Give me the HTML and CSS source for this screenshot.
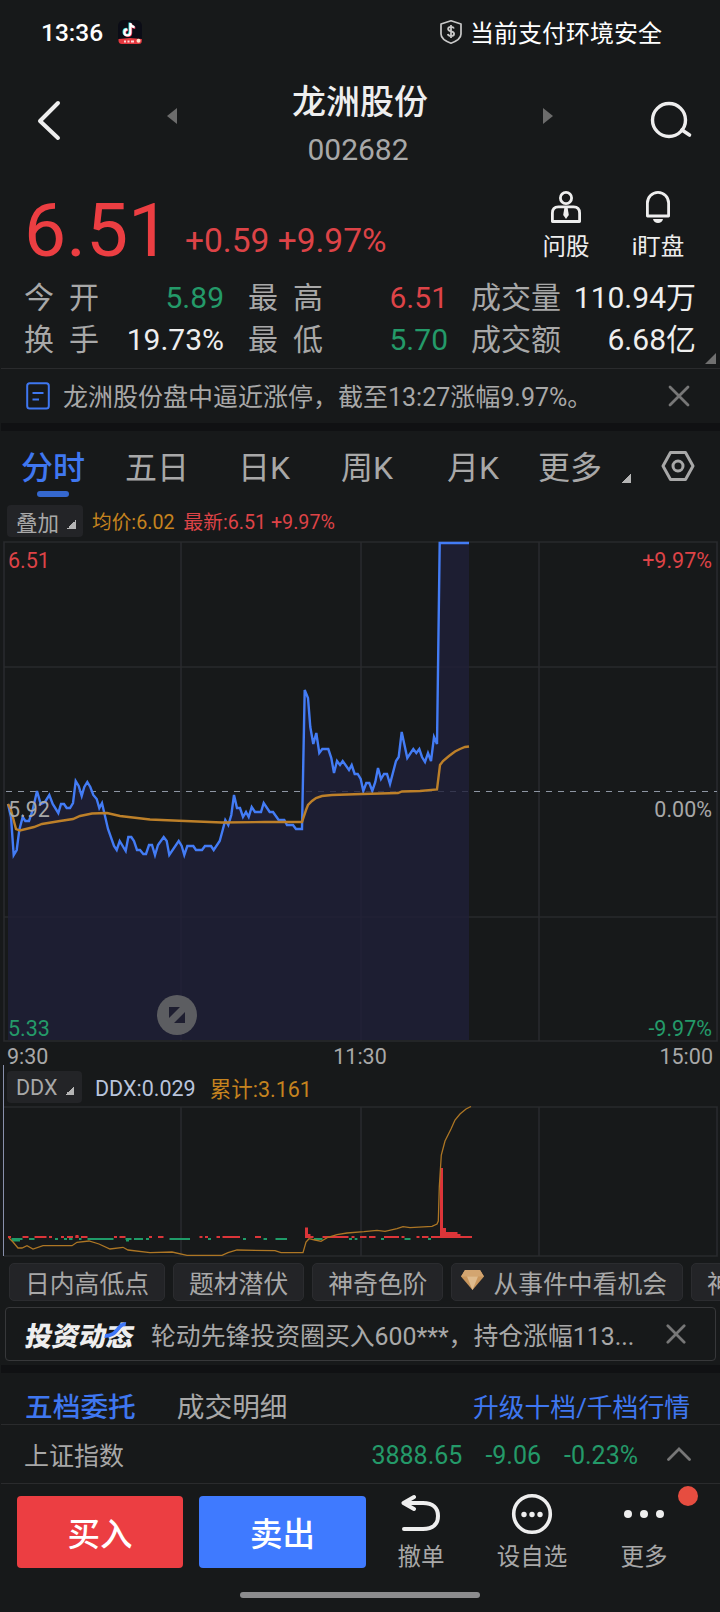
FILE: index.html
```html
<!DOCTYPE html>
<html lang="zh-CN">
<head>
    <meta charset="UTF-8">
    <meta name="viewport" content="width=device-width, initial-scale=1.0">
    <title>龙洲股份 002682</title>
    <link rel="stylesheet" href="styles.css">
</head>
<body>
    <div class="statusbar">
        <span class="clock">13:36</span>
        <svg class="app-icon" width="24" height="24" viewBox="0 0 24 24">
            <rect width="24" height="24" rx="6" fill="#0b0c16"/>
            <path d="M12.2 3v9.4a3 3 0 1 1-3-3M12.2 3.4c.4 2.3 2 3.6 4.2 3.8" transform="translate(-.6 -.5)" fill="none" stroke="#35dfe4" stroke-width="2.2"/>
            <path d="M12.2 3v9.4a3 3 0 1 1-3-3M12.2 3.4c.4 2.3 2 3.6 4.2 3.8" transform="translate(.9 .6)" fill="none" stroke="#ee3455" stroke-width="2.2"/>
            <path d="M12.2 3v9.4a3 3 0 1 1-3-3M12.2 3.4c.4 2.3 2 3.6 4.2 3.8" transform="translate(.2 0)" fill="none" stroke="#fff" stroke-width="2.2"/>
            <path d="M0.5 19 12 18l11.800 1v2a3 3 0 0 1-3 3H4a3.500 3.500 0 0 1-3.500-3z" fill="#e5383f"/>
            <path d="M6 21.500h2M9.500 21.500h2M13 21.500h3" stroke="#ffd6d6" stroke-width="2"/>
            <circle cx="20.500" cy="20.800" r="2" fill="#fbe3cc"/>
        </svg>
        <svg class="shield" width="24" height="26" viewBox="0 0 24 26">
            <path d="M12 1.800 22 5v10c0 4-4 7-10 9.200C6 22 2 19 2 15V5z" fill="none" stroke="#c8c8c8" stroke-width="1.700" stroke-linejoin="round"/>
            <path d="M15 9.500c-.5-1.300-1.600-1.700-3-1.700-1.700 0-2.900.8-2.900 2.200 0 3.200 6 1.700 6 4.800 0 1.500-1.300 2.300-3.100 2.300-1.600 0-2.800-.6-3.200-2M12 6v13" fill="none" stroke="#c8c8c8" stroke-width="1.800"/>
        </svg>
        <span class="pay-safe">当前支付环境安全</span>
    </div>

    <div class="header">
        <svg class="back" width="26" height="42" viewBox="0 0 26 42"><path d="M21 3 3 21l18 17" fill="none" stroke="#eee" stroke-width="4" stroke-linecap="round" stroke-linejoin="round"/></svg>
        <svg class="arrow" width="10" height="16" viewBox="0 0 10 16"><path d="M10 0v16L0 8z" fill="#6c6c6c"/></svg>
        <div class="title">
            <h1>龙洲股份</h1>
            <div class="code">002682</div>
        </div>
        <svg class="arrow" width="10" height="16" viewBox="0 0 10 16"><path d="M0 0v16l10-8z" fill="#6c6c6c"/></svg>
        <svg class="search" width="44" height="40" viewBox="0 0 44 40"><circle cx="20" cy="20" r="16.500" fill="none" stroke="#eee" stroke-width="3.400"/><path d="m33 30 7.500 5" stroke="#eee" stroke-width="3.600" stroke-linecap="round"/></svg>
    </div>

    <div class="quote">
        <div class="price">6.51</div>
        <div class="change">+0.59 +9.97%</div>
        <div class="quick">
            <svg width="34" height="36" viewBox="0 0 34 36"><g fill="none" stroke="#eee" stroke-width="2.800"><circle cx="17" cy="9" r="5.600"/><path d="M3.400 32.500V24c0-4 2-6.200 6-6.200h15.200c4 0 6 2.200 6 6.200v8.500z" stroke-linejoin="round"/></g><path d="M15.500 18h3l1.300 8-2.800 4-2.800-4z" fill="#eee"/></svg>
            <span>问股</span>
        </div>
        <div class="quick">
            <svg width="34" height="36" viewBox="0 0 34 36"><path d="M6.400 27V14a10.600 10.600 0 0 1 21.200 0v13z" fill="none" stroke="#eee" stroke-width="2.800" stroke-linejoin="round"/><path d="M12 30h10c-.5 2.500-2.500 4-5 4s-4.500-1.500-5-4z" fill="#eee"/></svg>
            <span>i盯盘</span>
        </div>
    </div>

    <div class="stats">
        <span class="label wide">今开</span><span class="value green">5.89</span>
        <span class="label wide">最高</span><span class="value red">6.51</span>
        <span class="label">成交量</span><span class="value">110.94万</span>
        <span class="label wide">换手</span><span class="value">19.73%</span>
        <span class="label wide">最低</span><span class="value green">5.70</span>
        <span class="label">成交额</span><span class="value">6.68亿</span>
        <i class="corner"></i>
    </div>

    <div class="notice">
        <svg width="24" height="28" viewBox="0 0 24 28"><g fill="none" stroke="#3f77f0" stroke-width="2"><rect x="1.200" y="1.200" width="21.600" height="25.200" rx="2.500"/><path d="M6.500 11h11M6.500 17.500h6.500"/></g></svg>
        <span class="notice-text">龙洲股份盘中逼近涨停，截至13:27涨幅9.97%。</span>
        <svg width="22" height="22" viewBox="0 0 22 22"><path d="m2 2 18 18M20 2 2 20" stroke="#777" stroke-width="2.800" stroke-linecap="round"/></svg>
    </div>

    <div class="band"></div>

    <div class="tabs">
        <span class="tab active">分时</span>
        <span class="tab">五日</span>
        <span class="tab">日K</span>
        <span class="tab">周K</span>
        <span class="tab">月K</span>
        <span class="tab">更多</span>
        <i class="tri"></i>
        <svg width="34" height="32" viewBox="0 0 34 32"><g fill="none" stroke="#a8a8a8" stroke-width="3"><path d="M9.500 2.500h15L32 16l-7.500 13.500h-15L2 16z" stroke-linejoin="round"/><circle cx="17" cy="16" r="5"/></g></svg>
    </div>

    <div class="legend">
        <span class="pick">叠加<i class="tri"></i></span>
        <span class="orange">均价:6.02</span>
        <span class="red">最新:6.51 +9.97%</span>
    </div>

    <div class="chart">
        <svg width="720" height="504" viewBox="0 540 720 504">
            <g class="grid">
                <path d="M4 542H717V1041H4zM181 542V1041M361 542V1041M539 542V1041M4 667H717M4 917H717"/>
            </g>
            <path d="M6 791.500H717" stroke="#8e96a3" stroke-width="1" stroke-dasharray="6 6"/>
            <path id="area" class="area"/>
            <polyline id="price" class="price-line" points="8,804 11,817 13.700,855 16.700,850 19.300,830 22.700,817 25.300,821 29,821 32.700,810 37,791 40.700,804 45,802 49.300,795 52.700,804 58.300,813 61,804 64,804 66.700,808 70,808 73,803 75.700,781 78.700,786 81.700,796 84.300,787 87.300,782 90.300,787 93.300,795 96.700,799 99.300,808 102,803 108,829 114,846 116.700,850 119.700,841 125.700,851 128.300,837 131.300,837 134,841 137,850 140,850 143.300,854 146,854 149,845 152,845 155,855 158,845 163.700,837 166.700,841 169.300,855 178.700,841 181.700,846 184.300,855 187.300,846 193.300,846 196,850 202,850 205,846 211,846 213.700,850 219.700,841 222.700,830 225.300,820 228.300,825 231.300,815 234,795 237,808 240,808 243,817 246,812 248.700,817 251.700,807 255,812 261,812 263.700,803 269.700,812 273,812 278.700,820 284.300,820 287,825 293,825 296,829 302,829 304.700,690 308,698 310.300,727 313.300,744 316.300,733 319.300,753 322.300,749 328.300,749 331.300,758 334,773 337,761 340,765 342.700,761 349,770 351.700,765 354.700,774 357.700,774 360.700,779 363.300,791 366.300,783 369.300,783 372.300,791 375.300,782 378,768 381,779 384,774 387,774 390,784 396,761 398.700,757 401.700,732 407.300,758 413.300,749 416.300,753 419.300,749 422,757 425,762 428,753 431,761 434,737 437,744 439.700,543 469,543"/>
            <polyline class="avg-line" points="8,804 11,810 16,829 20,830.500 34,827 42,824 60,821 73,819 80,816 92,813.500 107,813 120,816 150,819.500 185,821 222,822.500 265,822 302,822 306,810 308,805 312,801 316,798 322,796 332,795 362,794 398,793 402,791.500 420,791 437,789.500 440,765 443,761 449,756 455,751.500 460,749 465,747 469,746.500"/>
        </svg>
        <span class="axis top left red">6.51</span>
        <span class="axis top right red">+9.97%</span>
        <span class="axis mid left">5.92</span>
        <span class="axis mid right">0.00%</span>
        <span class="axis low left green">5.33</span>
        <span class="axis low right green">-9.97%</span>
        <svg class="expand" width="40" height="40" viewBox="0 0 40 40"><circle cx="20" cy="20" r="20" fill="#5c5d61"/><path d="M12 12h11L12 23zM28 17v11H17z" fill="#1e1e30"/></svg>
    </div>
    <div class="times"><span>9:30</span><span>11:30</span><span>15:00</span></div>

    <div class="ddx">
        <div class="legend">
            <span class="pick">DDX<i class="tri"></i></span>
            <span class="pale">DDX:0.029</span>
            <span class="orange">累计:3.161</span>
        </div>
        <svg width="720" height="152" viewBox="0 1106 720 152">
            <path class="grid" d="M4 1107H717V1256H4M181 1107V1256M361 1107V1256M539 1107V1256"/>
            <path d="M11.500 20h11M29 20h5.500M55 20h3M64 20h3M69 20h3.500M79 20h2.500M87.500 20h26M125.500 20h6M134 20h9M146 20h3M169.500 20h20.500M208 20h3M243 20h3M263.500 20h3.500M275.500 20h11.500M314 20h8.500M349 20h3M354.700 20h2.700M381 20h3M404.500 20h6M428 20h3" transform="translate(0 1219)" stroke="#1f9c69" stroke-width="2"/>
            <path d="M12 1240.500h8M126 1240.500h3" stroke="#1f9c69" stroke-width="2"/>
            <path d="M8 1237h3M22.500 1237h6M34.500 1237h12M49 1237h3M61 1237h3M67 1237h6M75.500 1237h3M81 1237h6.500M114 1237h3M119.500 1237h6M149 1237h3M158 1237h5.500M199.500 1237h3M205 1237h3M216.500 1237h3.500M222.500 1237h17.500M255 1237h6M322.500 1237h26M351.500 1237h3M360 1237h6.500M369 1237h6.500M384 1237h15M401.500 1237h3M416.500 1237h3M422 1237h6.500M431 1237h9" stroke="#dc3539" stroke-width="2"/>
            <path d="M75.500 1235h3v3h-3zM305 1227.500h3v10.500h-3zM308 1234h2.500v4H308zM310.500 1236h3v2h-3zM440 1168h3v70h-3zM443 1228h3v10h-3zM446 1232h11.500v6H446zM457.500 1234h3v4h-3zM460.500 1236H472v2h-11.500z" fill="#dc3539"/>
            <polyline class="sum-line" points="9,1238 13,1242 18,1248 22,1248 27,1245.700 33,1249 43,1245.700 72,1245.700 77,1242.300 89,1241 99,1244 110,1249 123,1247.300 128,1250 150,1252.700 172,1252 187,1255.300 222,1255.300 228,1252.700 237,1250 275,1250.700 281,1252.700 303,1252.700 306,1242 309,1238.700 315,1240 321,1241.300 328,1237.300 337,1234.700 347,1233 364,1231.700 377,1230.300 385,1231.300 397,1228.700 403,1226.700 410,1227.700 432,1226.300 437,1224 438.300,1221 439.300,1187 441.300,1155 445,1141 451,1129 455,1120 460,1114 466,1109 471,1106.500"/>
        </svg>
    </div>

    <div class="chips">
        <span class="chip">日内高低点</span>
        <span class="chip">题材潜伏</span>
        <span class="chip">神奇色阶</span>
        <span class="chip gem"><svg width="23" height="20" viewBox="0 0 23 20"><path d="M4 0h15l4 6.500L11.500 20 0 6.500z" fill="#c9965c"/><path d="M4 0h15l4 6.500H0z" fill="#d3a570"/><path d="M6 6.500h11L11.500 20z" fill="#dfbb8d"/></svg>从事件中看机会</span>
        <span class="chip">神</span>
    </div>

    <div class="feed">
        <span class="feed-logo">投资动态<svg width="22" height="17" viewBox="0 0 22 17"><path d="M1 14c8 0 10-4 12-7 1.500-3 3-5 7-5" fill="none" stroke="#3f77f8" stroke-width="4"/></svg></span>
        <span class="feed-text">轮动先锋投资圈买入600***，持仓涨幅113...</span>
        <svg width="20" height="20" viewBox="0 0 22 22"><path d="m2 2 18 18M20 2 2 20" stroke="#777" stroke-width="3" stroke-linecap="round"/></svg>
    </div>

    <div class="band"></div>

    <div class="orders">
        <span class="blue">五档委托</span>
        <span>成交明细</span>
        <span class="upgrade">升级十档/千档行情</span>
    </div>

    <div class="index">
        <span class="index-name">上证指数</span>
        <span>3888.65</span>
        <span>-9.06</span>
        <span>-0.23%</span>
        <svg width="24" height="14" viewBox="0 0 24 14"><path d="M1.500 12.500 12 2l10.500 10.500" fill="none" stroke="#777" stroke-width="2.800" stroke-linecap="round"/></svg>
    </div>

    <div class="actions">
        <button class="btn buy">买入</button>
        <button class="btn sell">卖出</button>
        <div class="action cancel">
            <svg width="42" height="42" viewBox="0 0 42 42"><path d="M14 4 3.500 10 14 16M4 10h19c10 0 15 5 15 13s-5 13-15 13H4" fill="none" stroke="#eee" stroke-width="4" stroke-linecap="round" stroke-linejoin="round"/></svg>
            <span>撤单</span>
        </div>
        <div class="action pick-stock">
            <svg width="42" height="42" viewBox="0 0 42 42"><circle cx="21" cy="21" r="18.300" fill="none" stroke="#eee" stroke-width="3.600"/><g fill="#eee"><circle cx="13" cy="21.500" r="2.700"/><circle cx="21" cy="21.500" r="2.700"/><circle cx="29" cy="21.500" r="2.700"/></g></svg>
            <span>设自选</span>
        </div>
        <div class="action more">
            <svg width="42" height="42" viewBox="0 0 42 42"><g fill="#eee"><circle cx="5" cy="21" r="4"/><circle cx="21" cy="21" r="4"/><circle cx="37" cy="21" r="4"/></g></svg>
            <span>更多</span>
            <i class="badge"></i>
        </div>
    </div>
    <div class="home-bar"></div>

    <script>
        // close the price line down to the bottom of the chart for the fill
        const points = document.getElementById('price').getAttribute('points');
        document.getElementById('area').setAttribute('d', 'M8,1040 L' + points + ' L469,1040 Z');
    </script>
</body>
</html>
```
FILE: styles.css
```css
* {
    box-sizing: border-box;
}
body {
    margin: 0;
    width: 720px;
    height: 1612px;
    overflow: hidden;
    background-color: #17191a;
    color: #a8a8a8;
    font-family: Roboto, "Noto Sans CJK SC", sans-serif;
    white-space: nowrap;
}
svg {
    display: block;
    flex: none;
}
.red { color: #dd4347; }
.green { color: #249a69; }
.orange { color: #c5831f; }
.blue { color: #3f77f0; }
.pale { color: #b9c4dc; }

.statusbar {
    display: flex;
    align-items: center;
    height: 64px;
    padding: 0 58px 0 41px;
    color: #fff;
    font-size: 24px;
}
.clock {
    width: 77px;
    font-size: 24.5px;
    font-weight: 500;
    line-height: 30px;
    padding-top: 1px;
}
.shield {
    margin: 0 7px 0 auto;
}
.pay-safe {
    padding-bottom: 2px;
}

.header {
    display: flex;
    align-items: flex-start;
    height: 116px;
    padding: 16px 27px 0 37px;
}
.back {
    margin-top: 20px;
}
.arrow {
    margin: 28px 0 0 104px;
}
.title {
    width: 366px;
    text-align: center;
}
.title + .arrow {
    margin-left: 0;
}
.search {
    margin: 20px 0 0 auto;
}
h1 {
    margin: 0;
    color: #eee;
    font-size: 34px;
    font-weight: 500;
    line-height: 45px;
}
.code {
    margin: 7px 4px 0 0;
    font-size: 30px;
    line-height: 36px;
}

.quote {
    display: flex;
    height: 97px;
    padding-left: 24px;
}
.price {
    width: 161px;
    color: #ec3e42;
    font-size: 75px;
    line-height: 100px;
}
.change {
    width: 347px;
    color: #dd4347;
    font-size: 33.5px;
    line-height: 122px;
}
.quick {
    display: flex;
    flex-direction: column;
    align-items: center;
    width: 68px;
    margin-right: 24px;
    padding-top: 9px;
    color: #eee;
    font-size: 23.5px;
}
.quick span {
    line-height: 45px;
}

.stats {
    display: grid;
    grid-template-columns: 76px 124px 24px 73px 127px 23px 90px 135px;
    grid-auto-rows: 42px;
    position: relative;
    height: 91px;
    padding-left: 24px;
    font-size: 30px;
    line-height: 42px;
}
.stats .label:nth-of-type(6n + 3) { grid-column: 4; }
.stats .label:nth-of-type(6n + 5) { grid-column: 7; }
.label.wide {
    letter-spacing: 15px;
}
.value {
    text-align: right;
}
.value:not(.red):not(.green) {
    color: #eee;
}
.corner {
    position: absolute;
    right: 4px;
    bottom: 4px;
    border-left: 11px solid transparent;
    border-bottom: 11px solid #707070;
}

.notice {
    display: flex;
    align-items: center;
    height: 55px;
    margin-left: 1px;
    padding: 0 30px 0 25px;
    border-top: 1px solid #2a2b2d;
    font-size: 25px;
}
.notice-text {
    flex: 1;
    margin-left: 13px;
    padding-bottom: 2px;
}
.band {
    height: 8px;
    margin-left: 1px;
    background-color: #101113;
}

.tabs {
    display: grid;
    grid-template-columns: 104px 113px 103px 106px 91px 84px 39px auto;
    height: 72px;
    padding-left: 21px;
    font-size: 32px;
    line-height: 74px;
}
.tab.active {
    position: relative;
    color: #3f77f0;
    font-weight: 500;
}
.tab.active::after {
    content: "";
    position: absolute;
    left: 16px;
    top: 60px;
    width: 32px;
    height: 6px;
    border-radius: 3px;
    background-color: #3568cf;
}
.tri {
    align-self: end;
    width: 9px;
    height: 9px;
    background: linear-gradient(135deg, transparent 50%, #b5b5b5 50%);
}
.tabs .tri {
    margin-bottom: 22px;
}
.tabs svg {
    margin-top: 19px;
}

.legend {
    display: flex;
    align-items: center;
    height: 37px;
    padding: 0 0 1px 7px;
    font-size: 19.7px;
}
.legend > .orange, .legend > .red {
    padding-bottom: 2px;
}
.pick {
    display: flex;
    align-items: center;
    width: 76px;
    height: 32px;
    margin-right: 9px;
    padding-left: 9px;
    border-radius: 4px;
    background-color: #232427;
    font-size: 21.5px;
}
.pick .tri {
    margin: 0 0 8px 8px;
}
.legend .orange {
    margin-right: 9px;
}

.chart {
    position: relative;
    height: 504px;
}
.grid {
    fill: none;
    stroke: #292a2d;
    stroke-width: 1.6;
}
.area {
    fill: #1f1f38;
    fill-opacity: 0.8;
}
.price-line {
    fill: none;
    stroke: #437cf5;
    stroke-width: 2.4;
}
.avg-line {
    fill: none;
    stroke: #bd8029;
    stroke-width: 2.4;
}
.sum-line {
    fill: none;
    stroke: #ad7624;
    stroke-width: 1.3;
}
.axis {
    position: absolute;
    font-size: 21.5px;
    line-height: 26px;
}
.axis.left { left: 8px; }
.axis.right { right: 8px; }
.axis.top { top: 8px; }
.axis.mid { top: 257px; }
.axis.low { top: 476px; }
.expand {
    position: absolute;
    left: 157px;
    top: 455px;
}
.times {
    display: grid;
    grid-template-columns: 1fr 1fr 1fr;
    height: 21px;
    padding: 0 7px;
    font-size: 21.5px;
    line-height: 26px;
}
.times span:nth-child(2) { text-align: center; }
.times span:nth-child(3) { text-align: right; }

.ddx {
    position: relative;
    height: 191px;
}
.ddx::before {
    content: "";
    position: absolute;
    left: 3px;
    top: 0;
    width: 1px;
    height: 191px;
    background-color: #8990ab;
}
.ddx .legend {
    height: 41px;
    padding: 3px 0 0 7px;
    font-size: 21.5px;
}
.ddx .pick {
    width: 75px;
    margin-right: 13px;
}
.ddx .pale {
    margin-right: 14px;
    padding-top: 2px;
}
.ddx .legend > .orange {
    padding-bottom: 0;
}

.chips {
    display: flex;
    gap: 8px;
    height: 51px;
    padding: 7px 0 0 9px;
    overflow: hidden;
}
.chip {
    display: flex;
    flex: none;
    align-items: center;
    height: 38px;
    padding: 0 15px;
    border: 1px solid #2b2c2f;
    border-radius: 5px;
    background-color: #232427;
    font-size: 24.8px;
}
.chip.gem {
    padding-left: 9px;
}
.chip.gem svg {
    margin: -4px 9px 0 0;
}

.feed {
    display: flex;
    align-items: center;
    height: 54px;
    margin: 0 4px 4px 5px;
    padding: 0 29px 0 20px;
    border: 1px solid #37383a;
    border-radius: 4px;
    font-size: 24.85px;
}
.feed-logo {
    position: relative;
    width: 125px;
    color: #eee;
    font-size: 27px;
    font-weight: 900;
    transform: skewX(-10deg);
}
.feed-logo svg {
    position: absolute;
    left: 78px;
    top: 7px;
}
.feed-text {
    flex: 1;
    padding-bottom: 1px;
}

.orders {
    display: flex;
    height: 52px;
    margin-left: 1px;
    padding: 0 30px 0 24px;
    border-bottom: 1px solid #2a2b2d;
    font-size: 27.7px;
    line-height: 70px;
}
.orders .blue {
    margin-right: 41px;
    font-weight: 500;
}
.upgrade {
    margin-left: auto;
    color: #3f77f0;
    font-size: 25.8px;
}

.index {
    display: flex;
    align-items: center;
    height: 59px;
    margin-left: 1px;
    padding: 0 29px 0 23px;
    border-bottom: 1px solid #2a2b2d;
    color: #249a69;
    font-size: 25px;
}
.index span + span {
    margin-right: 23px;
    padding-top: 3px;
}
.index .index-name {
    margin-right: auto;
    color: #a8a8a8;
}
.index svg {
    margin-left: 6px;
}

.actions {
    display: flex;
    position: relative;
    height: 108px;
    padding: 12px 0 0 17px;
}
.btn {
    width: 166px;
    height: 72px;
    margin: 0 16px 0 0;
    padding: 0 0 2px;
    border: none;
    border-radius: 4px;
    color: #fff;
    font-family: inherit;
    font-size: 32.5px;
    font-weight: 500;
}
.buy { background-color: #ec3e42; }
.sell {
    width: 167px;
    background-color: #3f7aff;
}
.action {
    display: flex;
    flex-direction: column;
    align-items: center;
    width: 72px;
    margin-top: -3px;
    font-size: 23.5px;
}
.action span {
    line-height: 45px;
}
.cancel { margin-left: 3px; }
.pick-stock { margin-left: 39px; }
.more { margin-left: 40px; }
.badge {
    position: absolute;
    left: 678px;
    top: 2px;
    width: 20px;
    height: 20px;
    border-radius: 50%;
    background-color: #e64d40;
}
.home-bar {
    width: 240px;
    height: 6px;
    margin: 0 auto;
    border-radius: 3px;
    background-color: #8c8c8e;
}
```
